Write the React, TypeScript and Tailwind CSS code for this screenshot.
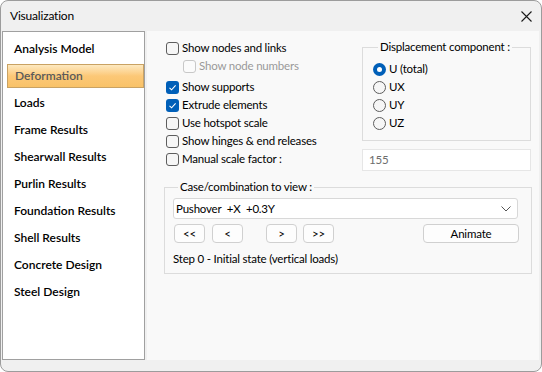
import React from 'react';

const font = { fontFamily: 'Lato, "Noto Sans", Arial, sans-serif' };

const menuItems = [
  'Analysis Model',
  'Deformation',
  'Loads',
  'Frame Results',
  'Shearwall Results',
  'Purlin Results',
  'Foundation Results',
  'Shell Results',
  'Concrete Design',
  'Steel Design',
];

const Check = ({ checked, disabled }: { checked?: boolean; disabled?: boolean }) => {
  if (checked) {
    return (
      <span className="w-[13px] h-[13px] rounded-[3px] bg-[#005fb8] flex items-center justify-center shrink-0">
        <svg width="9" height="9" viewBox="0 0 9 9" fill="none">
          <path d="M1.5 4.8 L3.6 6.8 L7.6 2.4" stroke="white" strokeWidth="1.1" />
        </svg>
      </span>
    );
  }
  return (
    <span
      className={`w-[13px] h-[13px] rounded-[3px] border shrink-0 ${
        disabled ? 'border-[#c8c8c8] bg-[#fbfbfb]' : 'border-[#5d5d5d] bg-[#f6f6f6]'
      }`}
    />
  );
};

const CheckRow = ({
  label,
  checked,
  disabled,
  indent,
}: {
  label: string;
  checked?: boolean;
  disabled?: boolean;
  indent?: boolean;
}) => (
  <div className={`h-[18px] flex items-center gap-[3px] whitespace-nowrap ${indent ? 'pl-[17px]' : ''}`}>
    <Check checked={checked} disabled={disabled} />
    <span className={disabled ? 'text-[#9a9a9a]' : 'text-black'}>{label}</span>
  </div>
);

const Radio = ({ label, selected }: { label: string; selected?: boolean }) => (
  <div className="h-[18px] flex items-center gap-[3px]">
    {selected ? (
      <span className="w-[13px] h-[13px] rounded-full bg-[#005fb8] flex items-center justify-center shrink-0">
        <span className="w-[5px] h-[5px] rounded-full bg-white" />
      </span>
    ) : (
      <span className="w-[13px] h-[13px] rounded-full border border-[#5d5d5d] bg-[#f6f6f6] shrink-0" />
    )}
    <span>{label}</span>
  </div>
);

const Btn = ({ label, className }: { label: string; className: string }) => (
  <button
    className={`h-[19px] rounded-[4px] border border-[#d0d0d0] bg-[#fdfdfd] text-black text-[11.5px] leading-none flex items-center justify-center ${className}`}
  >
    {label}
  </button>
);

export default function App() {
  return (
    <div
      className="w-[542px] h-[372px] bg-white text-[11.5px] tracking-[-0.2px] leading-[16px] text-black overflow-hidden"
      style={font}
    >
      <div className="w-full h-full bg-[#f0f0f0] border border-[#9c9c9c] rounded-[8px] flex flex-col">
        {/* Title bar */}
        <div className="h-[30px] flex items-center justify-between pl-[9px] pr-[8px] shrink-0">
          <span className="text-[12px]">Visualization</span>
          <svg width="11" height="11" viewBox="0 0 11 11" className="mr-[1px]">
            <path d="M0.5 0.5 L10.5 10.5 M10.5 0.5 L0.5 10.5" stroke="#1a1a1a" strokeWidth="1.1" />
          </svg>
        </div>

        <div className="flex gap-[2px] px-[1px]">
          {/* Left menu */}
          <div className="w-[143px] h-[329px] bg-white border border-[#a0a0a0] pt-[3px] text-[12px] tracking-normal">
            {menuItems.map((item) => (
              <div key={item} className="h-[27px] flex items-center">
                {item === 'Deformation' ? (
                  <div className="ml-[4px] w-[138px] h-[24px] flex items-center pl-[7px] border border-[#c9a263] bg-gradient-to-b from-[#fde9c0] via-[#fcc877] to-[#f9c268] text-[#5a5a5a] font-semibold">
                    {item}
                  </div>
                ) : (
                  <div className="pl-[11px] font-semibold">{item}</div>
                )}
              </div>
            ))}
          </div>

          {/* Right content */}
          <div className="w-[392px] h-[329px] bg-[#f9f9f9] pt-[8px] pl-[17px]">
            <div className="flex">
              <div className="w-[198px] pl-[2px]">
                <CheckRow label="Show nodes and links" />
                <CheckRow label="Show node numbers" disabled indent />
                <div className="h-[3px]" />
                <CheckRow label="Show supports" checked />
                <CheckRow label="Extrude elements" checked />
                <CheckRow label="Use hotspot scale" />
                <CheckRow label="Show hinges & end releases" />
                <CheckRow label="Manual scale factor :" />
              </div>
              <div className="w-[169px]">
                <fieldset className="border border-[#dcdcdc] pl-[10px] pt-[5px] pb-[8px]">
                  <legend className="ml-[5px] px-[2px] whitespace-nowrap">Displacement component :</legend>
                  <Radio label="U (total)" selected />
                  <Radio label="UX" />
                  <Radio label="UY" />
                  <Radio label="UZ" />
                </fieldset>
                <div className="mt-[8px] h-[22px] bg-white border border-[#e6e6e6] flex items-center pl-[6px] text-[#6d6d6d]">
                  155
                </div>
              </div>
            </div>

            <fieldset className="mt-[8px] w-[368px] border border-[#dcdcdc] pl-[8px] pr-[13px] pb-[6px]">
              <legend className="ml-[5px] px-[2px] whitespace-nowrap">Case/combination to view :</legend>
              <div className="mt-[3px] h-[21px] bg-white border border-[#d8d8d8] rounded-[3px] flex items-center justify-between pl-[2px] pr-[6px]">
                <span>Pushover &nbsp;+X &nbsp;+0.3Y</span>
                <svg width="10" height="6" viewBox="0 0 10 6">
                  <path d="M0.5 0.5 L5 5 L9.5 0.5" stroke="#555" strokeWidth="1" fill="none" />
                </svg>
              </div>
              <div className="mt-[5px] flex items-center pl-[1px]">
                <Btn label="<<" className="w-[31px]" />
                <Btn label="<" className="w-[31px] ml-[7px]" />
                <Btn label=">" className="w-[31px] ml-[23px]" />
                <Btn label=">>" className="w-[31px] ml-[6px]" />
                <Btn label="Animate" className="w-[96px] ml-auto mr-[-1px]" />
              </div>
              <div className="mt-[8px] h-[16px] flex items-center">Step 0 - Initial state (vertical loads)</div>
            </fieldset>
          </div>
        </div>
      </div>
    </div>
  );
}
